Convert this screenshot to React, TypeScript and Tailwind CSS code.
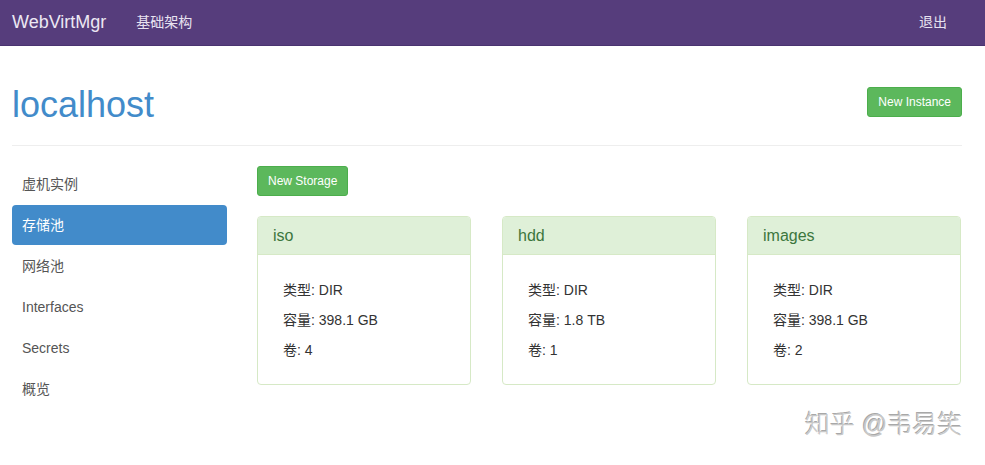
import React from "react";

const pools = [
  { name: "iso", type: "DIR", size: "398.1 GB", volumes: 4 },
  { name: "hdd", type: "DIR", size: "1.8 TB", volumes: 1 },
  { name: "images", type: "DIR", size: "398.1 GB", volumes: 2 },
];

const menu = ["虚机实例", "存储池", "网络池", "Interfaces", "Secrets", "概览"];

export default function App() {
  return (
    <div
      className="relative h-[465px] overflow-hidden bg-white text-[14px] text-[#333]"
      style={{ fontFamily: '"Liberation Sans", Arial, "Noto Sans CJK SC", sans-serif' }}
    >
      <nav className="flex h-[46px] items-center bg-[#563d7c] border-b border-[#4a3370] text-[#e8e2f0]">
        <div className="flex w-full items-center pl-[12px] pr-[38px]">
          <span className="text-[18px] text-[#ece8f3]">WebVirtMgr</span>
          <span className="ml-[30px] text-[14px]">基础架构</span>
          <span className="ml-auto text-[14px]">退出</span>
        </div>
      </nav>

      <div className="ml-[12px] w-[950px]">
        <div className="flex items-start justify-between pt-[39px] pb-[20px] border-b border-[#eee]">
          <h1 className="text-[36px] leading-[40px] text-[#428bca]">localhost</h1>
          <button className="mt-[2px] h-[30px] rounded-[3px] border border-[#4cae4c] bg-[#5cb85c] px-[10px] text-[12px] text-white">
            New Instance
          </button>
        </div>

        <div className="flex gap-[30px] pt-[20px]">
          <ul className="flex w-[215px] flex-col gap-[1px] -mt-[2px]">
            {menu.map((m) => (
              <li
                key={m}
                className={`h-[40px] rounded-[4px] px-[10px] leading-[40px] ${
                  m === "存储池" ? "bg-[#428bca] text-white" : "text-[#555]"
                }`}
              >
                {m}
              </li>
            ))}
          </ul>

          <div className="flex-1">
            <button className="h-[30px] rounded-[3px] border border-[#4cae4c] bg-[#5cb85c] px-[10px] text-[12px] text-white">
              New Storage
            </button>
            <div className="mt-[20px] flex gap-[31px]">
              {pools.map((p) => (
                <div key={p.name} className="w-[214px] overflow-hidden rounded-[4px] border border-[#d6e9c6]">
                  <div className="h-[38px] border-b border-[#d6e9c6] bg-[#dff0d8] px-[15px] text-[16px] leading-[37px] text-[#3c763d]">
                    {p.name}
                  </div>
                  <div className="px-[25px] pt-[20px] pb-[19px] leading-[30px]">
                    <div>类型: {p.type}</div>
                    <div>容量: {p.size}</div>
                    <div>卷: {p.volumes}</div>
                  </div>
                </div>
              ))}
            </div>
          </div>
        </div>
      </div>

      <div
        className="absolute left-[805px] top-[407px] whitespace-nowrap text-[25px] font-light leading-[34px] text-[#c8c8c8]"
        style={{ textShadow: "1px 1px 0 #fff, -1px -1px 0 #a8a8a8" }}
      >
        知乎 @韦易笑
      </div>
    </div>
  );
}
